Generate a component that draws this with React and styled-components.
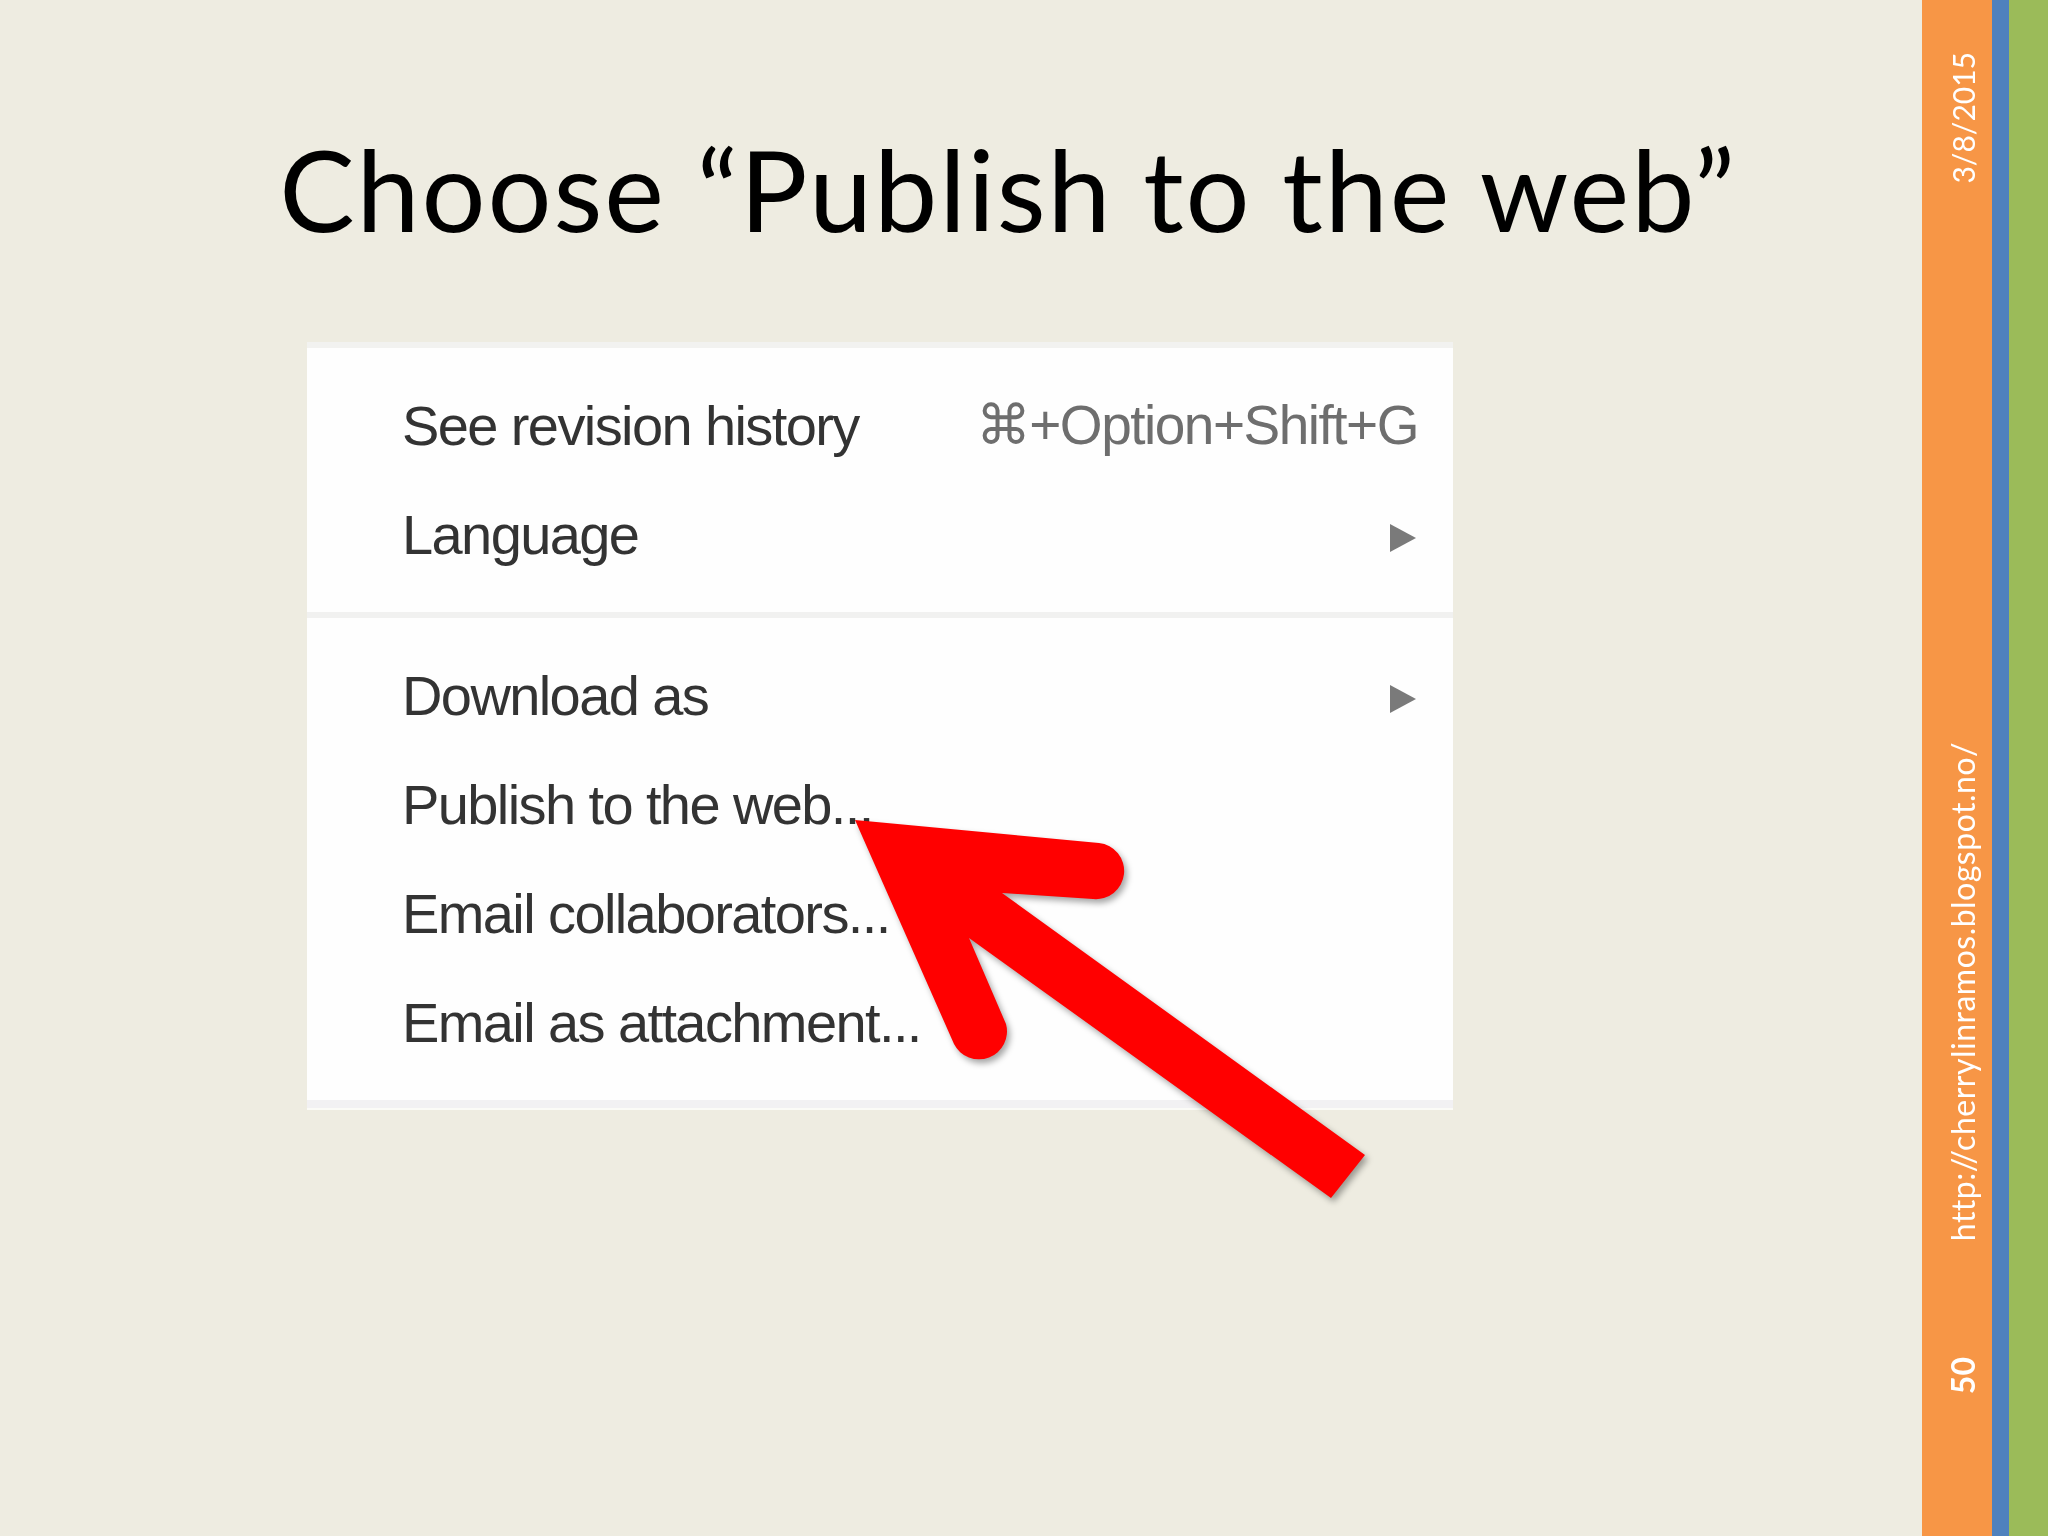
import React from "react";
import styled, { createGlobalStyle } from "styled-components";

const GlobalStyle = createGlobalStyle`
  html, body {
    margin: 0;
    padding: 0;
    background: #eeece1;
  }
`;

const Slide = styled.div`
  width: 2048px;
  height: 1536px;
  position: relative;
  display: flex;
  background: #eeece1;
  overflow: hidden;
`;

const Main = styled.main`
  width: 1922px;
  display: flex;
  flex-direction: column;
`;

const Title = styled.h1`
  margin: 0;
  padding: 122px 0 0 94px;
  font-family: Lato, "Open Sans", sans-serif;
  font-weight: 400;
  font-size: 113px;
  line-height: 133px;
  letter-spacing: 1.9px;
  text-align: center;
  color: #000;
`;

const Menu = styled.div`
  margin: 87px 0 0 307px;
  width: 1146px;
  box-sizing: border-box;
  background: #fefefe;
  border-top: 6px solid #f2f2f0;
  border-bottom: 8px solid #f2f1f3;
  box-shadow: 0 2px 0 #fbfbf7;
  font-family: "Liberation Sans", Arial, sans-serif;
`;

const Group = styled.div`
  padding: 23px 0;
`;

const Separator = styled.div`
  height: 6px;
  background: #f1f1f0;
`;

const Row = styled.div`
  height: 109px;
  display: flex;
  align-items: center;
  justify-content: space-between;
  padding: 0 35px 0 95px;
`;

const Label = styled.span`
  font-size: 56px;
  line-height: 109px;
  letter-spacing: -1.6px;
  color: #333;
`;

const Shortcut = styled.span`
  font-size: 55px;
  line-height: 109px;
  letter-spacing: -1.5px;
  color: #6e6e6e;
`;

const Submenu = styled.span`
  width: 0;
  height: 0;
  margin-top: 6px;
  margin-right: 2px;
  border-top: 14px solid transparent;
  border-bottom: 14px solid transparent;
  border-left: 26px solid #7a7a7a;
`;

const Sidebar = styled.aside`
  flex: 1;
  display: flex;
`;

const OrangeStrip = styled.div`
  width: 70px;
  background: #f79646;
  display: flex;
  flex-direction: column;
  align-items: center;
  padding-left: 12px;
  box-sizing: border-box;
  color: #fff;
  font-family: Lato, "Open Sans", sans-serif;
`;

const BlueStrip = styled.div`
  width: 17px;
  background: #4f81bd;
`;

const GreenStrip = styled.div`
  flex: 1;
  background: #9bbb59;
`;

const Slot = styled.div`
  height: ${p => p.$h}px;
  padding-top: ${p => p.$pt || 0}px;
  box-sizing: border-box;
  display: flex;
  flex-direction: column;
  justify-content: ${p => (p.$center ? "center" : "flex-start")};
  align-items: center;
`;

const VText = styled.span`
  writing-mode: vertical-rl;
  transform: rotate(180deg);
  white-space: nowrap;
  font-size: ${p => p.$size}px;
  font-weight: ${p => (p.$bold ? 700 : 400)};
  letter-spacing: ${p => p.$ls || 0}px;
  line-height: 1;
`;

const ArrowSvg = styled.svg`
  position: absolute;
  left: 0;
  top: 0;
  width: 2048px;
  height: 1536px;
  pointer-events: none;
  filter: drop-shadow(3px 4px 3px rgba(0, 0, 0, 0.35));
`;

const groups = [
  [
    { label: "See revision history", shortcut: "⌘+Option+Shift+G" },
    { label: "Language", sub: true },
  ],
  [
    { label: "Download as", sub: true },
    { label: "Publish to the web..." },
    { label: "Email collaborators..." },
    { label: "Email as attachment..." },
  ],
];

const App = () => {
  return (
    <Slide>
      <GlobalStyle />
      <Main>
        <Title>Choose “Publish to the web”</Title>
        <Menu>
          {groups.map((items, gi) => (
            <React.Fragment key={gi}>
              {gi > 0 && <Separator />}
              <Group>
                {items.map(item => (
                  <Row key={item.label}>
                    <Label>{item.label}</Label>
                    {item.shortcut && <Shortcut>{item.shortcut}</Shortcut>}
                    {item.sub && <Submenu />}
                  </Row>
                ))}
              </Group>
            </React.Fragment>
          ))}
        </Menu>
      </Main>
      <Sidebar>
        <OrangeStrip>
          <Slot $h={700} $pt={52}>
            <VText $size={30}>3/8/2015</VText>
          </Slot>
          <Slot $h={584} $center>
            <VText $size={32} $ls={0.5}>
              http://cherrylinramos.blogspot.no/
            </VText>
          </Slot>
          <Slot $h={184} $center>
            <VText $size={32} $bold>
              50
            </VText>
          </Slot>
        </OrangeStrip>
        <BlueStrip />
        <GreenStrip />
      </Sidebar>
      <ArrowSvg viewBox="0 0 2048 1536">
        <path
          fill="#ff0000"
          d="M 855 820 L 1099 843 A 28 28 0 0 1 1093 899 L 1002 893 L 1365 1155 L 1331 1198 L 969 938 L 1006 1024 A 28 28 0 0 1 954 1044 Z"
        />
      </ArrowSvg>
    </Slide>
  );
};

export default App;
